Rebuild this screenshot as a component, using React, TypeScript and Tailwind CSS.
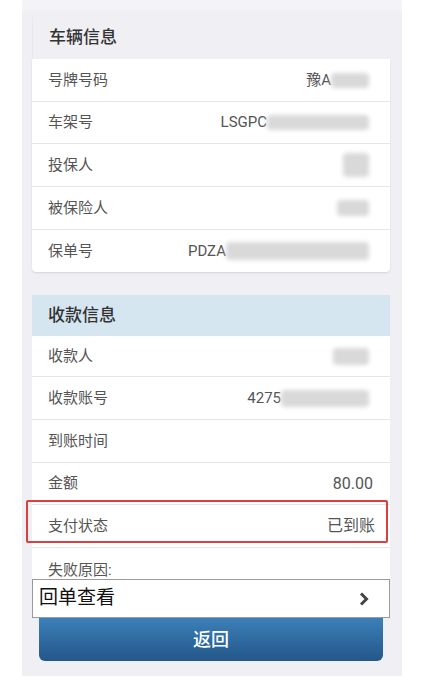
import React from "react";

const font = { fontFamily: 'Roboto, "Noto Sans CJK SC", "Noto Sans", sans-serif' };

function Blur({ w, h = 15, className = "" }: { w: number; h?: number; className?: string }) {
  return (
    <span
      className={`inline-block rounded-sm bg-[#d9d9d9] blur-[2px] ${className}`}
      style={{ width: w, height: h }}
    />
  );
}

function Row({
  label,
  children,
  h = 43,
  last = false,
}: {
  label: string;
  children?: React.ReactNode;
  h?: number;
  last?: boolean;
}) {
  return (
    <div
      className={`flex items-center justify-between pl-4 pr-[21px] ${last ? "" : "border-b border-[#e6e6e8]"}`}
      style={{ height: h }}
    >
      <span className="text-[15px] text-[#555]">{label}</span>
      <div className="flex items-center text-[15px] text-[#555]">{children}</div>
    </div>
  );
}

export default function App() {
  return (
    <div className="min-h-[695px] w-[440px] bg-white" style={font}>
      <div className="ml-[22px] flex h-[676px] w-[380px] flex-col bg-[#efeff4]">
        <div className="h-[10px] bg-[#f4f4f6]" />
        <div className="pl-[10px] pr-[12px] pt-[7px]">
          <div className="flex h-[42px] items-center border-l border-[#e8e8ec] pl-4 text-[17px] font-medium text-[#333]">
            车辆信息
          </div>
          <div className="rounded-b-sm bg-white shadow-[0_1px_2px_rgba(0,0,0,0.12)]">
            <Row label="号牌号码">
              <span>豫A</span>
              <Blur w={38} />
            </Row>
            <Row label="车架号" h={42}>
              <span>LSGPC</span>
              <Blur w={102} />
            </Row>
            <Row label="投保人">
              <Blur w={26} h={24} className="rounded-lg" />
            </Row>
            <Row label="被保险人">
              <Blur w={32} h={16} className="rounded-lg" />
            </Row>
            <Row label="保单号" h={42} last>
              <span>PDZA</span>
              <Blur w={143} h={18} />
            </Row>
          </div>
        </div>
        <div className="relative mt-[23px] pl-[10px] pr-[12px]">
          <div className="flex h-[41px] items-center bg-[#d6e6f0] pl-4 text-[17px] font-medium text-[#333]">
            收款信息
          </div>
          <div className="bg-white">
            <Row label="收款人" h={41}>
              <Blur w={36} h={17} />
            </Row>
            <Row label="收款账号">
              <span>4275</span>
              <Blur w={88} h={17} />
            </Row>
            <Row label="到账时间" />
            <Row label="金额" h={42}>
              <span className="-mr-[4px] text-[16px]">80.00</span>
            </Row>
            <Row label="支付状态">
              <span className="-mr-[6px] text-[16px]">已到账</span>
            </Row>
            <div className="h-[31px] pl-4 pt-[13px] text-[15px] leading-[18px] text-[#555]">失败原因:</div>
          </div>
          <div className="pointer-events-none absolute left-[4px] top-[205px] h-[43px] w-[362px] rounded-[2px] border-2 border-[#d9413e]" />
        </div>
        <div className="ml-[10px] mr-[12px] flex h-[39px] items-center justify-between border border-[#9a9a9a] bg-white pl-[6px] pr-[20px]">
          <span className="text-[19px] text-[#111]">回单查看</span>
          <svg width="10" height="14" viewBox="0 0 10 14">
            <path d="M2 1.5 L7.5 7 L2 12.5" fill="none" stroke="#444" strokeWidth="3" />
          </svg>
        </div>
        <div className="ml-[17px] mr-[19px] flex h-[43px] items-center justify-center rounded-b-[6px] bg-gradient-to-b from-[#3b80b8] to-[#24578a] text-[18px] font-medium text-white">
          返回
        </div>
      </div>
    </div>
  );
}
